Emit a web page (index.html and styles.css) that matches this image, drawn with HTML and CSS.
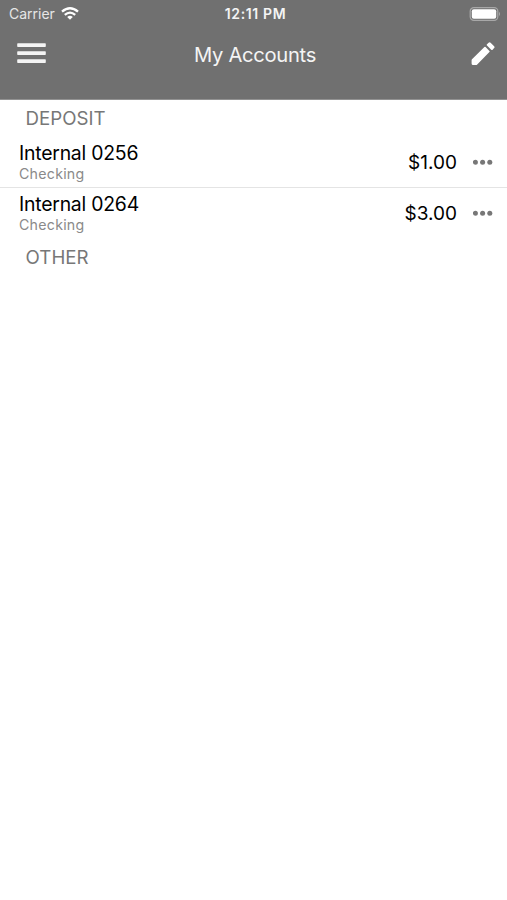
FILE: index.html
```html
<!DOCTYPE html>
<html lang="en">
<head>
<meta charset="utf-8">
<title>My Accounts</title>
<link rel="stylesheet" href="styles.css">
</head>
<body>
<header class="header">
  <div class="status">
    <div class="carrier"><span class="carrier-name">Carrier</span>
      <svg class="wifi" width="18" height="13" viewBox="0 0 18 13" fill="none" stroke="#fff" stroke-width="2.3"><path d="M1 4.7Q9-2.2 17 4.7M3.8 7.8Q9 3.4 14.2 7.8"/><path d="M6.2 9.9Q9 7.7 11.8 9.9L9 12.7Z" fill="#fff" stroke="none"/></svg>
    </div>
    <span class="time">12:11 PM</span>
    <svg class="battery" width="32" height="14" viewBox="0 0 32 14"><rect x="1.2" y=".7" width="27.6" height="12.6" rx="3.6" fill="none" stroke="#a8a8a8" stroke-width="1.2"/><rect x="2.8" y="2.2" width="24.4" height="9.6" rx="2" fill="#fff"/><path d="M30 4.8Q32 7 30 9.2Z" fill="#a8a8a8"/></svg>
  </div>
  <nav class="nav">
    <svg class="menu" width="30" height="22" viewBox="0 0 30 22" fill="#f4f4f4"><rect x="1.2" y=".3" width="28.6" height="3.7" rx=".7"/><rect x="1.2" y="8.3" width="28.6" height="3.7" rx=".7"/><rect x="1.2" y="16.3" width="28.6" height="3.7" rx=".7"/></svg>
    <h1 class="title">My Accounts</h1>
    <svg class="edit" width="24" height="24" viewBox="0 0 24 24" fill="#fff"><path d="M.6 18.2Q.6 17.7 1 17.3L13.4 5.1Q14 4.5 14.6 5.1L18.4 8.9Q19 9.5 18.4 10.1L6.2 22.5Q5.7 23 5.1 23H2.1Q.6 23 .6 21.5ZM16 3.5Q15.4 2.9 16 2.3L17.6.7Q18.6-.1 19.6.7L23.1 4.2Q24 5.1 23.1 6.1L21.6 7.7Q20.9 8.4 20.2 7.7Z"/></svg>
  </nav>
</header>
<main>
  <h2 class="section">DEPOSIT</h2>
  <div class="row">
    <div class="account"><div class="name">Internal 0256</div><div class="type">Checking</div></div>
    <span class="amount">$1.00</span>
    <svg class="more" width="20" height="6" viewBox="0 0 20 6" fill="#777"><circle cx="2.4" cy="3.2" r="2.5"/><circle cx="9.6" cy="3.2" r="2.5"/><circle cx="16.8" cy="3.2" r="2.5"/></svg>
  </div>
  <div class="row last">
    <div class="account"><div class="name">Internal 0264</div><div class="type">Checking</div></div>
    <span class="amount">$3.00</span>
    <svg class="more" width="20" height="6" viewBox="0 0 20 6" fill="#777"><circle cx="2.4" cy="3.2" r="2.5"/><circle cx="9.6" cy="3.2" r="2.5"/><circle cx="16.8" cy="3.2" r="2.5"/></svg>
  </div>
  <h2 class="section">OTHER</h2>
</main>
</body>
</html>
```
FILE: styles.css
```css
* { box-sizing: border-box; }
body { margin: 0; background: #fff; font-family: Inter, "Liberation Sans", sans-serif; }
.header { height: 100px; background: #707070; color: #f4f4f4; border-bottom: 1px solid #929292; }
.status { height: 27px; padding: 0 6px 0 9px; display: grid; grid-template-columns: 1fr auto 1fr; align-items: center; font-size: 14px; line-height: 26px; }
.carrier { display: flex; align-items: center; gap: 6.5px; color: #e6e6e6; height: 26px; }
.time { font-weight: 600; font-size: 14px; letter-spacing: .65px; padding-left: 1px; }
.battery { justify-self: end; }
.nav { height: 54px; padding: 0 12px 0 16px; display: grid; grid-template-columns: 1fr auto 1fr; align-items: center; }
.title { margin: 0; padding-top: 1px; padding-right: 1px; font-size: 20.2px; font-weight: 400; letter-spacing: -.3px; }
.edit { justify-self: end; }
.section { margin: 0; padding-left: 25.6px; height: 37px; line-height: 37px; font-size: 18.7px; font-weight: 400; color: #777; }
.row { height: 51px; padding: 1px 14px 0 19px; display: flex; align-items: center; border-bottom: 1px solid #e4e4e4; }
.last { border-bottom-color: transparent; }
.account { flex: 1; }
.name { font-size: 19.4px; line-height: 21px; letter-spacing: -.22px; color: #000; }
.type { font-size: 14.2px; line-height: 19px; letter-spacing: .25px; color: #8a8a8a; }
.amount { margin: -1px 16px 0 0; font-size: 19px; color: #000; }
.more { margin-top: -1px; }
```
